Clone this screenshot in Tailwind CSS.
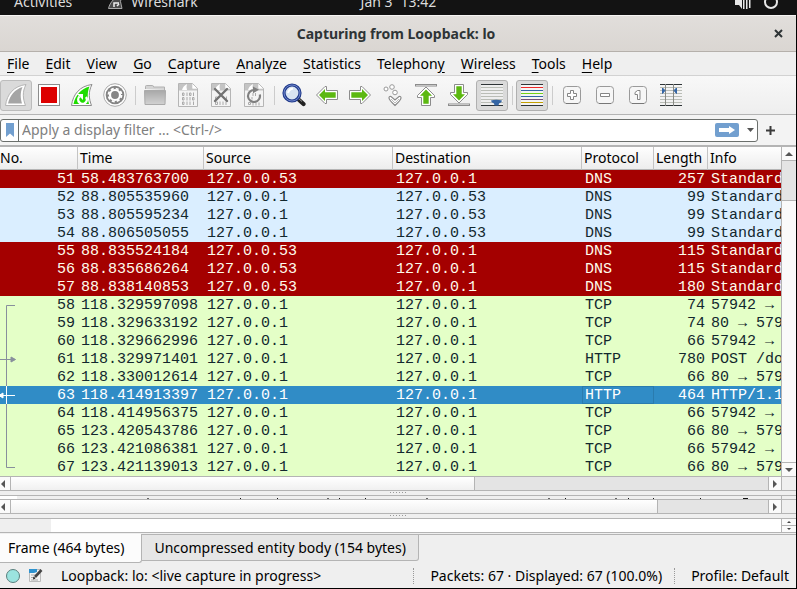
<!DOCTYPE html>
<html lang="en">
<head>
<meta charset="utf-8">
<title>Capturing from Loopback: lo</title>
<script src="https://cdn.jsdelivr.net/npm/@tailwindcss/browser@4"></script>
</head>
<body class="h-screen overflow-hidden flex flex-col bg-black font-['Noto_Sans','Open_Sans',sans-serif] text-[14px] leading-5 text-black">

<!-- Desktop bar -->
<header class="h-[15px] shrink-0 overflow-hidden bg-[#131313] text-[#dcdcdc] grid grid-cols-3 grid-rows-[15px] items-end">
  <div class="flex items-center gap-9 pl-[14px] h-[27px]">
    <a href="#">Activities</a>
    <a href="#" class="flex items-center gap-2">
      <svg width="15" height="16" viewBox="0 0 15 16"><path d="M0.500 14.500C2 8 7 3 14 0Q11 8 14 14.500Z" fill="#4a4a4a" stroke="#aaa"/><path d="M6 13V9h5M9 12l2-2" stroke="#eee" stroke-width="1.500" fill="none"/></svg>
      Wireshark</a>
  </div>
  <div class="flex justify-center gap-2 h-[27px] items-center"><span>Jan 3</span><span>13:42</span></div>
  <div class="flex justify-end gap-3 pr-[18px] h-[27px] items-center">
    <svg width="17" height="16" viewBox="0 0 17 16" fill="#e6e6e6"><path d="M1 6h4l3-4v13l-3-4H1z"/><path d="M9 1h1.500v14H9zM12 1h1.500v14H12zM15 0h1.500v14H15z"/></svg>
    <svg width="16" height="16" viewBox="0 0 16 16" fill="none" stroke="#e6e6e6" stroke-width="2"><circle cx="8" cy="8" r="6"/></svg>
  </div>
</header>

<main class="flex-1 min-h-0 flex flex-col bg-[#efefef] border-r border-b border-black">
  <!-- Title bar -->
  <div class="h-[37px] shrink-0 flex items-center border-t border-t-[#f7f5f4] border-b border-b-[#b5b0ab] bg-linear-to-b from-[#e1dedb] to-[#dad6d2] text-[#2e3436]">
    <div class="w-8"></div>
    <h1 class="flex-1 text-center font-bold">Capturing from Loopback: lo</h1>
    <button aria-label="Close" class="w-9 flex justify-center"><svg width="9" height="9" viewBox="0 0 9 9"><path d="M1 1l7 7M8 1l-7 7" stroke="#2e3436" stroke-width="2"/></svg></button>
  </div>

  <!-- Menu -->
  <nav class="h-6 shrink-0 flex items-center gap-4 pl-[7px] border-b border-[#d2d2d2] whitespace-nowrap">
    <button><span class="underline underline-offset-3">F</span>ile</button>
    <button><span class="underline underline-offset-3">E</span>dit</button>
    <button><span class="underline underline-offset-3">V</span>iew</button>
    <button><span class="underline underline-offset-3">G</span>o</button>
    <button><span class="underline underline-offset-3">C</span>apture</button>
    <button><span class="underline underline-offset-3">A</span>nalyze</button>
    <button><span class="underline underline-offset-3">S</span>tatistics</button>
    <button>Telephon<span class="underline underline-offset-3">y</span></button>
    <button><span class="underline underline-offset-3">W</span>ireless</button>
    <button><span class="underline underline-offset-3">T</span>ools</button>
    <button><span class="underline underline-offset-3">H</span>elp</button>
  </nav>

  <!-- Toolbar -->
  <div class="h-[39px] shrink-0 flex items-center gap-px border-b border-[#b4b4b4] bg-linear-to-b from-[#f8f8f8] to-[#eee]">
    <button aria-label="Start capture" class="w-8 h-[31px] flex items-center justify-center rounded-[3px] border border-[#bcbcbc] bg-[#dadada]"><svg width="24" height="24" viewBox="0 0 24 24"><path d="M1.500 22.500C3 11 10 3 22 1.500C18 9 19 16 21.500 22.500Z" fill="#fff" stroke="#b4b4b4"/><path d="M4 20.500C6 12 11 6.500 18.500 4C16 10 16.500 15 18 20.500Z" fill="#a5a5a5"/></svg></button>
    <button aria-label="Stop capture" class="w-8 h-[31px] flex items-center justify-center"><svg width="22" height="22" viewBox="0 0 22 22"><rect x=".5" y=".5" width="21" height="21" fill="#fff" stroke="#8c8c8c"/><rect x="3" y="3" width="16" height="16" fill="#d00"/></svg></button>
    <button aria-label="Restart capture" class="w-8 h-[31px] flex items-center justify-center"><svg width="24" height="24" viewBox="0 0 24 24"><path d="M1.500 22.500C3 11 10 3 22 1.500C18 9 19 16 21.500 22.500Z" fill="#fff" stroke="#8c8c8c"/><path d="M3.500 21C5.500 12 11 6 19.500 3.500C17 10 17.500 15 19 21Z" fill="#1fdc00"/><path d="M9.500 13.500A4.300 4.300 0 1 0 16 14" fill="none" stroke="#fff" stroke-width="2.400"/><path d="M7 11h6v6z" fill="#fff"/></svg></button>
    <button aria-label="Capture options" class="w-8 h-[31px] flex items-center justify-center"><svg width="24" height="24" viewBox="0 0 24 24"><circle cx="12" cy="12" r="11.300" fill="#fff" stroke="#aaa"/><circle cx="12" cy="12" r="9.300" fill="#858585"/><circle cx="12" cy="12" r="5" fill="none" stroke="#fff" stroke-width="2.200"/><circle cx="12" cy="12" r="6.500" fill="none" stroke="#fff" stroke-width="1.800" stroke-dasharray="3 2.105"/></svg></button>
    <div class="w-[6px] flex justify-center"><div class="w-px h-[19px] bg-[#ccc]"></div></div>
    <button aria-label="Open" class="w-8 h-[31px] flex items-center justify-center"><svg width="24" height="22" viewBox="0 0 24 22"><defs><linearGradient id="folder" x1="0" y1="0" x2="0" y2="1"><stop offset="0" stop-color="#a8a8a8"/><stop offset="1" stop-color="#d2d2d2"/></linearGradient></defs><path d="M2.500 5V2.500q0-1 1-1h6q1 0 1 1.500H21.500V6" fill="#d4d4d4" stroke="#b0b0b0"/><path d="M1.500 6.500H22.500L22 20.500H2Z" fill="url(#folder)" stroke="#aaa"/></svg></button>
    <button aria-label="Save" class="w-8 h-[31px] flex items-center justify-center"><svg width="20" height="24" viewBox="0 0 20 24"><path d="M.5.5h14l5 5v18H.5z" fill="#f4f4f4" stroke="#b5b5b5"/><path d="M1 1h13.500v4.500h4.500v2H1z" fill="#c4c4c4"/><path d="M4 7q1-4 5-6q-1 3 0 6z" fill="#fff"/><path d="M14.500 1v4.500H19z" fill="#fff"/><g fill="none" stroke="#aaa" stroke-width="1"><path d="M4.500 10h1.500v2.500h-1.500zM11.500 10h1.500v2.500h-1.500zM4.500 14.500h1.500v2.500h-1.500zM14.500 14.500h1.500v2.500h-1.500zM4.500 19h1.500v2.500h-1.500zM9 9.500v3.500M15.500 9.500v3.500M9 14v3.500M12 14v3.500M9 18.500v3.500M12 18.500v3.500M15.500 18.500v3.500"/></g></svg></button>
    <button aria-label="Close file" class="w-8 h-[31px] flex items-center justify-center"><svg width="20" height="24" viewBox="0 0 20 24"><path d="M.5.5h14l5 5v18H.5z" fill="#f4f4f4" stroke="#b5b5b5"/><path d="M1 1h13.500v4.500h4.500v2H1z" fill="#c4c4c4"/><path d="M4 7q1-4 5-6q-1 3 0 6z" fill="#fff"/><path d="M14.500 1v4.500H19z" fill="#fff"/><path d="M4.500 14h2v2.500h-2zM4.500 19h2v2.500h-2zM9 18.500v3.500M12 18.500v3.500M15 18.500v3.500M15.500 13.500v3.500" fill="none" stroke="#aaa"/><path d="M4 6l12 12M16 6L4 18" stroke="#737373" stroke-width="2.400" stroke-linecap="round"/></svg></button>
    <button aria-label="Reload file" class="w-8 h-[31px] flex items-center justify-center"><svg width="20" height="24" viewBox="0 0 20 24"><path d="M.5.5h14l5 5v18H.5z" fill="#f4f4f4" stroke="#b5b5b5"/><path d="M1 1h13.500v4.500h4.500v2H1z" fill="#c4c4c4"/><path d="M4 7q1-4 5-6q-1 3 0 6z" fill="#fff"/><path d="M14.500 1v4.500H19z" fill="#fff"/><path d="M9 10v3M11.500 10v3M8 14v2.500M4.500 19.500h2v2h-2zM9 19.500v3M12 19.500v3M15 19.500v3" fill="none" stroke="#aaa"/><path d="M15.800 11.500A6 6 0 1 1 10 7" fill="none" stroke="#808080" stroke-width="2.200"/><path d="M9 3.500l6 3.300l-6 3.500z" fill="#808080"/></svg></button>
    <div class="w-[6px] flex justify-center"><div class="w-px h-[19px] bg-[#ccc]"></div></div>
    <button aria-label="Find packet" class="w-8 h-[31px] flex items-center justify-center"><svg width="24" height="24" viewBox="0 0 24 24"><path d="M16 16l5.500 5" stroke="#222" stroke-width="4.200" stroke-linecap="round"/><path d="M16 15l4 3.500" stroke="#999" stroke-width="1"/><circle cx="10" cy="10" r="8" fill="#d8e4f2" stroke="#223c8c" stroke-width="3.200"/><circle cx="10" cy="10" r="8" fill="none" stroke="#6f86cc" stroke-width="1"/><path d="M6 10q1-4 5-4.500" fill="none" stroke="#fff" stroke-width="2"/></svg></button>
    <button aria-label="Previous packet" class="w-8 h-[31px] flex items-center justify-center"><svg width="24" height="24" viewBox="0 0 24 24"><path d="M1.500 12L10 3.500h1.500V7.500H22.500v9H11.500v4H10Z" fill="#fff" stroke="#8c8c8c" stroke-linejoin="round"/><path d="M4 12l6-6v3.300h10.700v5.400H10V18z" fill="#5cb811"/></svg></button>
    <button aria-label="Next packet" class="w-8 h-[31px] flex items-center justify-center"><svg width="24" height="24" viewBox="0 0 24 24"><path d="M22.500 12L14 3.500h-1.500V7.500H1.500v9H12.500v4H14Z" fill="#fff" stroke="#8c8c8c" stroke-linejoin="round"/><path d="M20 12l-6-6v3.300H3.300v5.400H14V18z" fill="#5cb811"/></svg></button>
    <button aria-label="Go to packet" class="w-8 h-[31px] flex items-center justify-center"><svg width="22" height="24" viewBox="0 0 22 24" fill="#fff" stroke="#999"><circle cx="4" cy="6" r="2"/><circle cx="10" cy="4" r="2.300"/><circle cx="13" cy="9.500" r="2.300"/><path d="M7 15q0-2 2-1.500l4 3.500l4-3.500q2-.5 2 1.500q0 2-6 7.500q-6-5.500-6-7.500z" stroke="#8a8a8a" stroke-width="1.200"/><path d="M9 16l4 4l4-4" fill="none" stroke="#bbb"/></svg></button>
    <button aria-label="First packet" class="w-8 h-[31px] flex items-center justify-center"><svg width="24" height="24" viewBox="0 0 24 24"><rect x="1.500" y="1.500" width="21" height="1.500" fill="#fff" stroke="#8c8c8c"/><path d="M12 4L3.500 12.500v2H7.500V22.500h9V14.500h4v-2Z" fill="#fff" stroke="#8c8c8c" stroke-linejoin="round"/><path d="M12 6.500l-6 6.200h3.300V20.700h5.400V12.700H18z" fill="#5cb811"/></svg></button>
    <button aria-label="Last packet" class="w-8 h-[31px] flex items-center justify-center"><svg width="24" height="24" viewBox="0 0 24 24"><rect x="1.500" y="21" width="21" height="1.500" fill="#fff" stroke="#8c8c8c"/><path d="M12 20L3.500 11.500v-2H7.500V1.500h9V9.500h4v2Z" fill="#fff" stroke="#8c8c8c" stroke-linejoin="round"/><path d="M12 17.500l-6-6.200h3.300V3.300h5.400V11.300H18z" fill="#5cb811"/></svg></button>
    <button aria-label="Auto scroll" aria-pressed="true" class="w-8 h-[31px] flex items-center justify-center rounded-[3px] border border-[#b0b0b0] bg-[#dadada]"><svg width="22" height="22" viewBox="0 0 22 22"><path fill="#eee" d="M0 0h22v22H0z"/><path d="M0 .5h22M0 21.500h22" stroke="#2e3436"/><path d="M0 3.500h22M0 6.500h22M0 9.500h22M0 12.500h22M0 15.500h22M0 18.500h22" stroke="#babdb6"/><path d="M10 16.500q5-1.500 11 0q0 2-3 3l-.5 2h-4l-.5-2q-3-1-3-3z" fill="#3465a4"/></svg></button>
    <div class="w-[6px] flex justify-center"><div class="w-px h-[19px] bg-[#ccc]"></div></div>
    <button aria-label="Colorize" aria-pressed="true" class="w-8 h-[31px] flex items-center justify-center rounded-[3px] border border-[#b0b0b0] bg-[#dadada]"><svg width="22" height="22" viewBox="0 0 22 22"><path fill="#f4f4f4" d="M0 0h22v22H0z"/><path d="M0 .5h22M0 21.500h22" stroke="#2e3436"/><path d="M0 3.500h22" stroke="#ef2929"/><path d="M0 6.500h22M0 12.500h22" stroke="#3465a4"/><path d="M0 9.500h22" stroke="#73d216"/><path d="M0 15.500h22" stroke="#75507b"/><path d="M0 18.500h22" stroke="#c4a000"/></svg></button>
    <div class="w-[6px] flex justify-center"><div class="w-px h-[19px] bg-[#ccc]"></div></div>
    <button aria-label="Zoom in" class="w-8 h-[31px] flex items-center justify-center"><svg width="20" height="20" viewBox="0 0 20 20"><rect x="1.500" y="1.500" width="17" height="17" rx="3" fill="#f6f6f6" stroke="#9a9a9a"/><path d="M4 18.500h12" stroke="#777"/><path d="M8.500 5.500h3v3h3v3h-3v3h-3v-3h-3v-3h3z" fill="#fff" stroke="#858585"/></svg></button>
    <button aria-label="Zoom out" class="w-8 h-[31px] flex items-center justify-center"><svg width="20" height="20" viewBox="0 0 20 20"><rect x="1.500" y="1.500" width="17" height="17" rx="3" fill="#f6f6f6" stroke="#9a9a9a"/><path d="M4 18.500h12" stroke="#777"/><path d="M5.500 8.500h9v3h-9z" fill="#fff" stroke="#858585"/></svg></button>
    <button aria-label="Normal size" class="w-8 h-[31px] flex items-center justify-center"><svg width="20" height="20" viewBox="0 0 20 20"><rect x="1.500" y="1.500" width="17" height="17" rx="3" fill="#f6f6f6" stroke="#9a9a9a"/><path d="M4 18.500h12" stroke="#777"/><path d="M9.500 5.500h2.500v9h-2.500v-5h-2.500v-2z" fill="#fff" stroke="#858585"/></svg></button>
    <button aria-label="Resize columns" class="w-8 h-[31px] flex items-center justify-center"><svg width="22" height="22" viewBox="0 0 22 22"><path d="M0 .5h22M0 21.500h22" stroke="#2e3436"/><path d="M0 3.500h22M0 6.500h22M0 9.500h22M0 12.500h22M0 15.500h22M0 18.500h22" stroke="#babdb6"/><path d="M5.500 0v22M13.500 0v22" stroke="#888a85"/><path d="M2.500 4l2.500 2.500l-2.500 3zM16.500 4l-2.500 2.500l2.500 3z" fill="#3465a4" stroke="#3465a4"/></svg></button>
  </div>

  <!-- Display filter -->
  <form class="h-[32px] shrink-0 flex items-center border-b-2 border-[#b4b4b4] bg-[#f3f3f3]">
    <div class="flex-1 h-[23px] flex items-stretch rounded-[3px] border border-[#6b6f6c] bg-white">
      <button type="button" aria-label="Bookmark" class="w-[18px] flex items-center justify-center border-r border-[#6b6f6c]"><svg width="8" height="14" viewBox="0 0 8 14"><path d="M0 0h8v14l-4-3.500L0 14z" fill="#729fcf"/></svg></button>
      <input aria-label="Display filter" placeholder="Apply a display filter … &lt;Ctrl-/&gt;" class="flex-1 min-w-0 px-[3px] outline-none placeholder:text-[#808080]">
      <button aria-label="Apply" class="self-center w-6 h-[14px] flex items-center justify-center rounded-[2px] bg-[#729fcf]"><svg width="16" height="8" viewBox="0 0 16 8"><path d="M0 2h10V0l6 4l-6 4V6H0z" fill="#fff"/></svg></button>
      <button type="button" aria-label="Recent filters" class="w-[18px] flex items-center justify-center pl-1"><svg width="7" height="4" viewBox="0 0 7 4"><path d="M0 0h7L3.500 4z" fill="#555"/></svg></button>
    </div>
    <button type="button" aria-label="Add filter button" class="w-[38px] flex items-center pl-2"><svg width="9" height="9" viewBox="0 0 9 9"><path d="M4.500 0v9M0 4.500h9" stroke="#3a3a3a" stroke-width="2"/></svg></button>
  </form>

  <!-- Packet list -->
  <section class="flex-1 min-h-0 flex overflow-hidden">
    <div class="relative flex-1 min-w-0 overflow-hidden bg-white">
      <table class="w-full table-fixed border-separate border-spacing-0 whitespace-nowrap">
        <colgroup><col class="w-[78px]"><col class="w-[126px]"><col class="w-[189px]"><col class="w-[189px]"><col class="w-[72px]"><col class="w-[54px]"><col></colgroup>
        <thead>
          <tr class="h-[23px] bg-linear-to-b from-[#fefefe] to-[#ececec] text-left *:font-normal *:p-0 *:pl-[2px] *:border-r *:border-r-[#c4c4c4] *:last:border-r-0 *:border-b *:border-b-[#b4b4b4] *:overflow-hidden">
            <th><span class="-ml-[2px]">No.</span></th><th>Time</th><th>Source</th><th>Destination</th><th>Protocol</th><th>Length</th><th>Info</th>
          </tr>
        </thead>
        <tbody id="rows" class="font-['Liberation_Mono',monospace] text-[15px] leading-4"></tbody>
      </table>
      <!-- Conversation marks beside the rows -->
      <svg class="absolute left-0 top-[23px]" width="18" height="306" viewBox="0 0 18 306" fill="none" stroke="#888f9c"><path d="M15 135.500H6.500V297.500H15M0 189.500h11"/><path d="M11 187l4.500 2.500L11 192z" fill="#888f9c"/><path d="M6.500 216v18M2 225.500h13" stroke="#fff"/><path d="M3 223l-4 2.500L3 228z" fill="#fff" stroke="#fff"/></svg>
    </div>
    <div class="w-[15px] flex flex-col border-l border-[#b4b4b4] bg-[#fafafa]">
      <button aria-label="Scroll up" class="h-[14px] flex items-center justify-center border-b border-[#b4b4b4]"><svg width="8" height="4" viewBox="0 0 8 4"><path d="M0 4h8L4 0z" fill="#555"/></svg></button>
      <div class="h-10 bg-[#e4e4e4] border-b border-[#b4b4b4]"></div>
      <div class="flex-1"></div>
      <button aria-label="Scroll down" class="h-[14px] flex items-center justify-center border-t border-[#b4b4b4]"><svg width="8" height="4" viewBox="0 0 8 4"><path d="M0 0h8L4 4z" fill="#555"/></svg></button>
    </div>
  </section>
  <div class="h-[15px] shrink-0 flex border-y border-[#b4b4b4]">
    <button aria-label="Scroll left" class="w-[11px] flex items-center pl-px border-r border-[#b4b4b4] bg-[#fafafa]"><svg width="4" height="8" viewBox="0 0 4 8"><path d="M4 0v8L0 4z" fill="#555"/></svg></button>
    <div class="flex-1 flex bg-[#e4e4e4]"><div class="bg-linear-to-b from-white to-[#f0f0f0] border-r border-[#b4b4b4]" style="width:61.300%"></div></div>
    <button aria-label="Scroll right" class="w-[14px] flex items-center justify-center border-x border-[#b4b4b4] bg-[#fafafa]"><svg width="4" height="8" viewBox="0 0 4 8"><path d="M0 0v8L4 4z" fill="#555"/></svg></button>
    <div class="w-[14px]"></div>
  </div>
  <div class="h-1 shrink-0 flex justify-center items-start pt-px"><svg width="17" height="1" viewBox="0 0 17 1"><path d="M0 .5h17" stroke="#999" stroke-dasharray="1 2"/></svg></div>

  <!-- Packet details, folded nearly shut -->
  <section class="h-1 shrink-0 flex border-t border-[#b4b4b4]">
    <div class="w-[17px] bg-white"></div><div class="flex-1 overflow-hidden"><svg class="block w-full" height="3"><path d="M130 2.500h2M310 2.500h2M409 2.500h2M531 2.500h2M598 2.500h2" stroke="#666"/><path d="M223 2.500h1M260 2.500h1M322 2.500h1M348 2.500h1M548 2.500h1M611 2.500h1M636 2.500h1M683 2.500h1M726 2.500h5" stroke="#111"/></svg></div>
    <div class="w-[15px] border-l border-[#b4b4b4]"></div>
  </section>
  <div class="h-[15px] shrink-0 flex border-y border-[#b4b4b4]">
    <button aria-label="Scroll left" class="w-[11px] flex items-center pl-px border-r border-[#b4b4b4] bg-[#fafafa]"><svg width="4" height="8" viewBox="0 0 4 8"><path d="M4 0v8L0 4z" fill="#555"/></svg></button>
    <div class="flex-1 flex bg-[#e4e4e4]"><div class="bg-linear-to-b from-white to-[#f0f0f0] border-r border-[#b4b4b4]" style="width:85.500%"></div></div>
    <button aria-label="Scroll right" class="w-[14px] flex items-center justify-center border-x border-[#b4b4b4] bg-[#fafafa]"><svg width="4" height="8" viewBox="0 0 4 8"><path d="M0 0v8L4 4z" fill="#555"/></svg></button>
    <div class="w-[14px]"></div>
  </div>
  <div class="h-1 shrink-0 flex justify-center items-start pt-px"><svg width="17" height="1" viewBox="0 0 17 1"><path d="M0 .5h17" stroke="#999" stroke-dasharray="1 2"/></svg></div>

  <!-- Packet bytes -->
  <section class="h-[15px] shrink-0 flex border-y border-[#b4b4b4]">
    <div class="w-[51px]"></div><div class="flex-1 bg-white"></div>
    <div class="w-[15px] flex flex-col border-l border-[#b4b4b4]">
      <button aria-label="Scroll up" class="flex-1 flex items-center justify-center border-b border-[#b4b4b4] bg-[#fafafa]"><svg width="4" height="2" viewBox="0 0 4 2"><path d="M0 2h4L2 0z" fill="#444"/></svg></button>
      <button aria-label="Scroll down" class="flex-1 flex items-center justify-center bg-[#fafafa]"><svg width="4" height="2" viewBox="0 0 4 2"><path d="M0 0h4L2 2z" fill="#444"/></svg></button>
    </div>
  </section>
  <div class="h-[30px] shrink-0 flex items-start pt-px" role="tablist">
    <button role="tab" aria-selected="true" class="h-[29px] pl-2 pr-[17px] border-r border-b border-[#b4b4b4] rounded-br-[3px] bg-[#fcfcfc] whitespace-nowrap">Frame (464 bytes)</button>
    <button role="tab" aria-selected="false" class="h-[27px] px-3 border border-l-0 border-[#b4b4b4] rounded-br-[3px] bg-[#e6e6e6] whitespace-nowrap">Uncompressed entity body (154 bytes)</button>
    <div class="flex-1 border-t border-[#b4b4b4]"></div>
  </div>

  <!-- Status bar -->
  <footer class="h-[25px] shrink-0 flex items-center pl-[6px] pr-[7px] whitespace-nowrap">
    <button aria-label="Expert information"><svg width="14" height="14" viewBox="0 0 14 14"><circle cx="7" cy="7" r="6.500" fill="#9be3df" stroke="#5a7f7d"/></svg></button>
    <button aria-label="Capture comments" class="ml-2"><svg width="16" height="15" viewBox="0 0 16 15"><path d="M1.500 1.500h11v12h-11z" fill="#f4f4f2" stroke="#bbb"/><path d="M1 1h8v3l-3 1H1z" fill="#2f93cf"/><path d="M3 7h5M3 9.500h4M3 12h7" stroke="#aaa"/><path d="M13.500 2L7 9" stroke="#444" stroke-width="2.600"/><path d="M5 11.500l.5-3l2 2z" fill="#222"/></svg></button>
    <span class="ml-[17px] flex-1">Loopback: lo: &lt;live capture in progress&gt;</span>
    <span class="h-4 flex items-center border-l border-dotted border-[#999] pl-4 pr-3">Packets: 67 · Displayed: 67 (100.0%)</span>
    <button class="h-4 flex items-center border-l border-dotted border-[#999] pl-4">Profile: Default</button>
  </footer>
</main>

<script>
const D = '127.0.0.1', S = '127.0.0.53', Q = 'Standard query', A = '57942 → 80', B = '80 → 57942';
const red = 'bg-[#a40000] text-[#fffcec]', blue = 'bg-[#daeeff] text-[#12272e]', green = 'bg-[#e4ffc7] text-[#12272e]', sel = 'bg-[#308cc6] text-white';
const packets = [
  [51,'58.483763700',S,D,'DNS',257,Q,red],
  [52,'88.805535960',D,S,'DNS',99,Q,blue],
  [53,'88.805595234',D,S,'DNS',99,Q,blue],
  [54,'88.806505055',D,S,'DNS',99,Q,blue],
  [55,'88.835524184',S,D,'DNS',115,Q,red],
  [56,'88.835686264',S,D,'DNS',115,Q,red],
  [57,'88.838140853',S,D,'DNS',180,Q,red],
  [58,'118.329597098',D,D,'TCP',74,A,green],
  [59,'118.329633192',D,D,'TCP',74,B,green],
  [60,'118.329662996',D,D,'TCP',66,A,green],
  [61,'118.329971401',D,D,'HTTP',780,'POST /do',green],
  [62,'118.330012614',D,D,'TCP',66,B,green],
  [63,'118.414913397',D,D,'HTTP',464,'HTTP/1.1 200 OK',sel],
  [64,'118.414956375',D,D,'TCP',66,A,green],
  [65,'123.420543786',D,D,'TCP',66,B,green],
  [66,'123.421086381',D,D,'TCP',66,A,green],
  [67,'123.421139013',D,D,'TCP',66,B,green]
];
document.getElementById('rows').innerHTML = packets.map(p =>
  `<tr class="h-[18px] ${p[7]}">` + p.slice(0, 7).map((v, i) =>
    `<td class="p-0 pt-[2px] overflow-hidden ${i === 0 || i === 5 ? 'text-right pr-[3px]' : 'pl-[3px]'} ${p[7] === sel && i === 4 ? 'outline-1 -outline-offset-1 outline-[#2a7bae]' : ''}">${v}</td>`).join('') + '</tr>').join('');
</script>
</body>
</html>
